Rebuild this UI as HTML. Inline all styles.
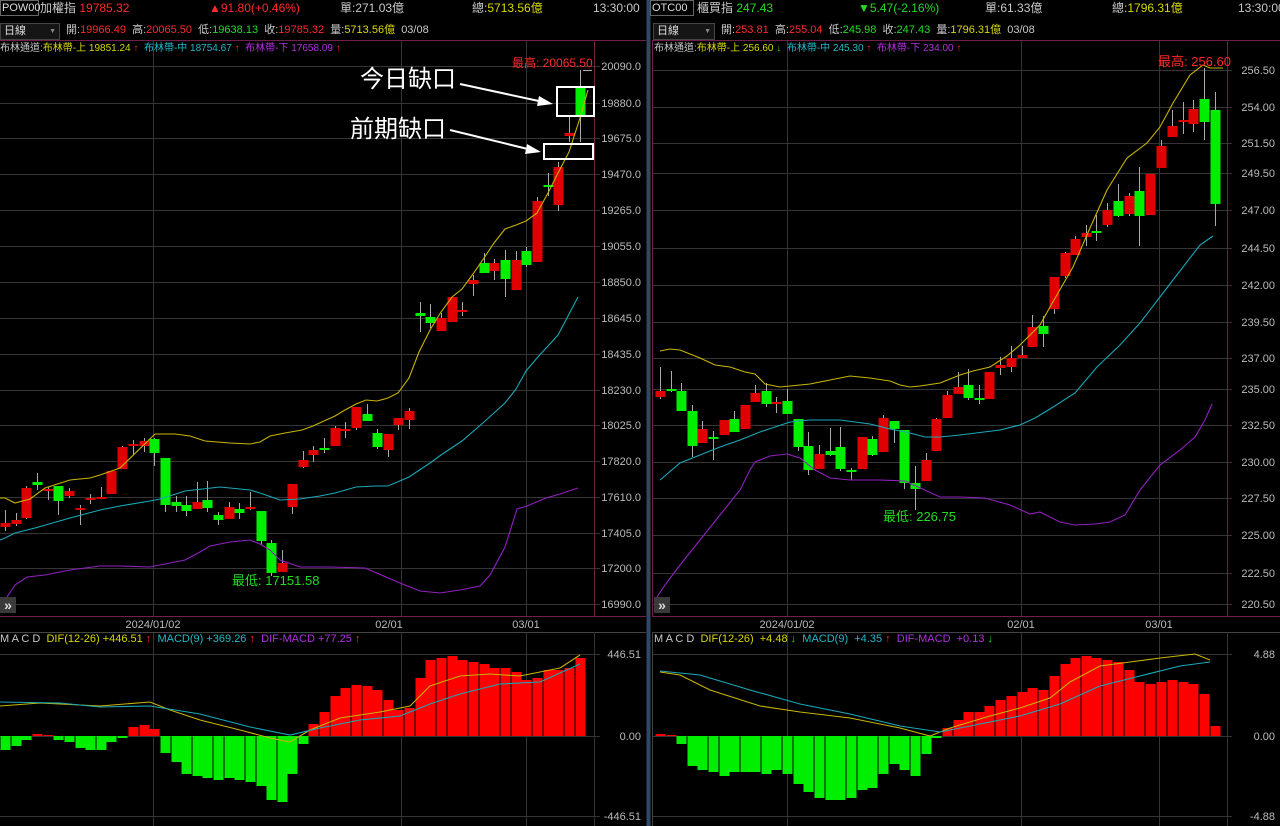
<!DOCTYPE html>
<html><head><meta charset="utf-8">
<style>
body{margin:0;background:#000;width:1280px;height:826px;overflow:hidden;font-family:"Liberation Sans","Noto Sans CJK TC",sans-serif;color:#c8c8c8}
.t{position:absolute;white-space:nowrap;font-size:12px;line-height:14px}
.r{color:#ff2a2a}.g{color:#22dd22}.y{color:#d8d800}.c{color:#22b8c8}.p{color:#b030e0}.w{color:#c8c8c8}
.box{position:absolute;border:1px solid #666;background:#000;font-size:11px;color:#ddd}
svg{position:absolute;left:0;top:0}
</style></head><body>
<svg id="s" width="1280" height="826" xmlns="http://www.w3.org/2000/svg" font-family="Liberation Sans, Noto Sans CJK TC, sans-serif"></svg>

<div class="box" style="left:0;top:0;width:36px;height:14px;line-height:14px;padding-left:1px">POW00</div>
<div class="t" style="left:40px;top:1px">加權指 <span class="r">19785.32</span></div>
<div class="t r" style="left:209px;top:1px">▲91.80(+0.46%)</div>
<div class="t" style="left:340px;top:1px">單:271.03億</div>
<div class="t" style="left:472px;top:1px">總:<span class="y">5713.56億</span></div>
<div class="t" style="left:593px;top:1px">13:30:00</div>
<div class="box" style="left:0;top:23px;width:55px;height:15px;line-height:15px;padding-left:3px;border-color:#444;background:#151515">日線<span style="float:right;font-size:7px;color:#888;margin-right:3px">▼</span></div>
<div class="t" style="left:66px;top:23px;font-size:11px">開:<span class="r">19966.49</span>&nbsp; 高:<span class="r">20065.50</span>&nbsp; 低:<span class="g">19638.13</span>&nbsp; 收:<span class="r">19785.32</span>&nbsp; 量:<span class="y">5713.56億</span>&nbsp; 03/08</div>
<div class="t" style="left:0;top:42px;font-size:10px">布林通道:<span class="y">布林帶-上 19851.24</span> <span class="r">↑</span>&nbsp; <span class="c">布林帶-中 18754.67</span> <span class="r">↑</span>&nbsp; <span class="p">布林帶-下 17658.09</span> <span class="r">↑</span></div>

<div class="box" style="left:650px;top:0;width:41px;height:14px;line-height:14px;padding-left:1px">OTC00</div>
<div class="t" style="left:697px;top:1px">櫃買指 <span class="g">247.43</span></div>
<div class="t g" style="left:858px;top:1px">▼5.47(-2.16%)</div>
<div class="t" style="left:985px;top:1px">單:61.33億</div>
<div class="t" style="left:1112px;top:1px">總:<span class="y">1796.31億</span></div>
<div class="t" style="left:1238px;top:1px">13:30:00</div>
<div class="box" style="left:653px;top:23px;width:57px;height:15px;line-height:15px;padding-left:3px;border-color:#444;background:#151515">日線<span style="float:right;font-size:7px;color:#888;margin-right:3px">▼</span></div>
<div class="t" style="left:721px;top:23px;font-size:11px">開:<span class="r">253.81</span>&nbsp; 高:<span class="r">255.04</span>&nbsp; 低:<span class="g">245.98</span>&nbsp; 收:<span class="g">247.43</span>&nbsp; 量:<span class="y">1796.31億</span>&nbsp; 03/08</div>
<div class="t" style="left:654px;top:42px;font-size:10px">布林通道:<span class="y">布林帶-上 256.60</span> <span class="g">↓</span>&nbsp; <span class="c">布林帶-中 245.30</span> <span class="r">↑</span>&nbsp; <span class="p">布林帶-下 234.00</span> <span class="r">↑</span></div>

<div class="t" style="left:0;top:632px;font-size:11px">M A C D&nbsp; <span class="y">DIF(12-26) +446.51</span> <span class="r">↑</span>&nbsp; <span class="c">MACD(9) +369.26</span> <span class="r">↑</span>&nbsp; <span class="p">DIF-MACD +77.25</span> <span class="r">↑</span></div>
<div class="t" style="left:654px;top:632px;font-size:11px">M A C D&nbsp; <span class="y">DIF(12-26)&nbsp; +4.48</span> <span class="g">↓</span>&nbsp; <span class="c">MACD(9)&nbsp; +4.35</span> <span class="r">↑</span>&nbsp; <span class="p">DIF-MACD&nbsp; +0.13</span> <span class="g">↓</span></div>

<div class="t r" style="left:512px;top:56px;font-size:12px">最高: 20065.50</div>
<div class="t g" style="left:232px;top:574px;font-size:13px">最低: 17151.58</div>
<div class="t r" style="left:1158px;top:55px;font-size:13px">最高: 256.60</div>
<div class="t g" style="left:883px;top:510px;font-size:13px">最低: 226.75</div>
<div class="t" style="left:360px;top:66px;font-size:24px;line-height:28px;color:#fff">今日缺口</div>
<div class="t" style="left:350px;top:116px;font-size:24px;line-height:28px;color:#fff">前期缺口</div>

<script>
var s=document.getElementById('s'),h='';
function L(x1,y1,x2,y2,c,w){h+='<line x1="'+x1+'" y1="'+y1+'" x2="'+x2+'" y2="'+y2+'" stroke="'+c+'" stroke-width="'+(w||1)+'"/>';}
function R(x,y,w,hh,c){h+='<rect x="'+x+'" y="'+y+'" width="'+w+'" height="'+hh+'" fill="'+c+'"/>';}
function P(pts,c){h+='<polyline fill="none" stroke="'+c+'" stroke-width="1.1" points="'+pts+'"/>';}
function T(x,y,t,c,a,fs){h+='<text x="'+x+'" y="'+y+'" fill="'+(c||'#bbbbbb')+'" font-size="'+(fs||11)+'" text-anchor="'+(a||'end')+'">'+t+'</text>';}
var G='#353535';
var ly=[66,103,138,174,210,246,282,318,354,390,425,461,497,533,568,604];
var ll=['20090.0','19880.0','19675.0','19470.0','19265.0','19055.0','18850.0','18645.0','18435.0','18230.0','18025.0','17820.0','17610.0','17405.0','17200.0','16990.0'];
ly.forEach(function(y,i){L(0,y+.5,600,y+.5,G);T(641,y+4,ll[i]);});
[153,401,526].forEach(function(x){L(x+.5,40,x+.5,616,G);L(x+.5,632,x+.5,826,G);});
var ry=[70,107,143,173,210,248,285,322,358,389,425,462,498,535,573,604];
var rl=['256.50','254.00','251.50','249.50','247.00','244.50','242.00','239.50','237.00','235.00','232.50','230.00','227.50','225.00','222.50','220.50'];
ry.forEach(function(y,i){L(652,y+.5,1232,y+.5,G);T(1275,y+4,rl[i]);});
[787,1021,1159].forEach(function(x){L(x+.5,40,x+.5,616,G);L(x+.5,632,x+.5,826,G);});
[654,736,816].forEach(function(y){L(0,y+.5,600,y+.5,G);L(652,y+.5,1232,y+.5,G);});
T(641,658,'446.51');T(641,740,'0.00');T(641,820,'-446.51');
T(1275,658,'4.88');T(1275,740,'0.00');T(1275,820,'-4.88');
T(153,628,'2024/01/02','#bbbbbb','middle');T(389,628,'02/01','#bbbbbb','middle');T(526,628,'03/01','#bbbbbb','middle');
T(787,628,'2024/01/02','#bbbbbb','middle');T(1021,628,'02/01','#bbbbbb','middle');T(1159,628,'03/01','#bbbbbb','middle');
L(0,40.5,646,40.5,'#70204a');L(594.5,40,594.5,616,'#70204a');L(0,616.5,646,616.5,'#70204a');
L(652.5,40,652.5,616,'#70204a');L(652,40.5,1280,40.5,'#70204a');L(1227.5,40,1227.5,616,'#70204a');L(652,616.5,1280,616.5,'#70204a');
L(0,632.5,646,632.5,'#444');L(652,632.5,1280,632.5,'#444');L(594.5,632,594.5,826,'#333');L(1227.5,632,1227.5,826,'#333');L(652.5,632,652.5,826,'#444');
R(646,0,1,826,'#223');R(647,0,3,826,'#2a4a6a');R(650,0,1,826,'#222');
function C(a){a.forEach(function(c){var col=c[5]?'#e00000':'#00ee00';L(c[0]+.5,c[3],c[0]+.5,c[4],'#aaa');var hh=Math.max(c[2]-c[1],2);R(c[0]-4.5,c[1],10,hh,col);});}
C([[5,523,527,510,531,1],[16,520,524,513,526,1],[26,488,518,486,519,1],[37,482,485,473,490,0],[48,489,491,487,500,1],[58,486,501,486,515,0],[69,491,496,488,498,1],[80,508,510,505,525,1],[90,498,500,494,504,1],[101,497,499,487,499,1],[111,471,494,471,494,1],[122,447,469,446,469,1],[133,444,446,440,455,1],[144,441,446,438,452,1],[154,439,453,438,466,0],[165,458,505,458,512,0],[176,502,506,496,512,0],[186,505,511,496,516,0],[197,502,509,482,509,1],[207,500,508,481,512,0],[218,515,520,512,525,0],[229,507,519,502,519,1],[239,509,513,503,519,0],[250,507,509,492,510,1],[261,511,541,511,545,0],[271,543,573,540,576,0],[282,563,572,550,572,1],[292,484,507,484,514,1],[303,460,467,451,468,1],[313,450,455,446,462,1],[324,448,450,438,453,0],[335,428,446,426,446,1],[345,429,431,422,438,1],[356,407,428,407,430,1],[367,414,421,404,421,0],[377,433,447,429,449,0],[388,434,450,434,457,1],[398,418,425,418,430,1],[409,411,420,408,429,1],[420,313,316,302,332,0],[430,317,323,304,328,0],[441,318,331,313,331,1],[452,297,322,297,322,1],[462,310,312,302,316,1],[473,280,284,275,296,1],[484,263,273,253,273,0],[494,263,271,259,280,1],[505,260,279,250,297,0],[516,260,290,251,290,1],[526,251,265,247,267,0],[537,201,262,197,262,1],[548,185,187,173,196,0],[558,167,205,162,211,1],[569,133,136,117,142,1],[580,88,117,70,142,0]]);
C([[660,391,397,367,399,1],[671,389,391,371,392,0],[681,391,411,383,411,0],[692,411,446,405,457,0],[702,429,443,421,443,1],[713,437,439,431,460,0],[724,420,435,420,435,1],[734,419,432,411,432,0],[745,405,429,405,429,1],[755,393,402,385,402,1],[766,391,404,383,407,0],[776,402,404,397,413,1],[787,401,414,389,414,0],[798,419,447,419,451,0],[808,446,470,432,475,0],[819,454,469,445,469,1],[830,451,455,428,456,0],[840,447,469,427,471,0],[851,470,472,468,480,0],[862,437,469,437,469,1],[872,439,455,436,456,0],[883,418,452,415,452,1],[894,421,429,421,443,0],[904,430,483,430,489,0],[915,483,489,466,510,0],[926,460,481,453,481,1],[936,419,451,418,451,1],[947,395,418,391,418,1],[958,387,394,372,394,1],[968,385,398,369,400,0],[979,398,400,385,404,0],[989,372,399,372,399,1],[1000,365,368,357,375,1],[1011,358,367,346,372,1],[1022,355,358,346,358,1],[1032,327,347,315,347,1],[1043,326,334,316,347,0],[1054,277,309,277,314,1],[1065,253,276,252,278,1],[1075,239,255,236,255,1],[1086,233,237,225,246,1],[1096,231,233,215,241,0],[1107,210,225,203,227,1],[1118,201,216,184,217,0],[1129,196,214,193,216,1],[1139,191,216,167,246,0],[1150,174,215,174,215,1],[1161,146,168,140,168,1],[1172,126,137,110,137,1],[1183,120,122,102,134,1],[1193,109,124,100,132,1],[1204,99,122,68,140,0],[1215,110,204,92,226,0]]);
P('0,498 5,498 15,503 30,499 45,488 70,480 90,478 100,475 120,468 155,434 175,434 190,436 205,441 230,443 250,444 260,442 270,436 285,433 302,430 313,426 324,421 335,416 345,410 356,404 366,400 377,401 388,398 398,393 409,378 419,352 430,330 441,312 452,297 462,289 473,274 484,258 494,243 505,229 516,225 526,221 537,213 548,193 558,173 569,152 580,118 588,90','#c8b400');
L(583,70.5,592,70.5,'#aaa');
P('0,540 5,538 15,533 35,528 70,518 100,510 120,506 150,501 160,499 185,491 220,487 250,490 260,493 280,500 300,499 320,496 335,493 356,487 375,486 388,486 409,477 430,463 441,455 462,441 484,422 505,403 516,389 526,371 537,358 558,335 578,297','#1aa8b8');
P('0,606 5,600 15,585 27,577 45,575 70,570 100,566 120,566 150,567 185,560 200,552 210,546 230,542 250,540 260,544 270,550 280,560 300,567 330,567 365,568 400,583 420,591 440,593 460,590 480,586 490,575 505,547 517,509 527,506 546,498 560,494 578,488','#9020c0');
P('660,351 670,349 680,350 700,358 715,365 730,367 745,372 755,374 765,384 780,387 800,385 810,384 830,380 850,376 870,378 890,381 900,385 910,387 920,386 940,383 960,375 973,371 990,367 1007,356 1020,345 1040,325 1050,307 1073,267 1090,228 1107,190 1127,158 1147,143 1160,127 1173,103 1190,75 1203,65 1210,68 1223,68','#c8b400');
P('660,480 680,463 700,455 720,447 740,440 760,432 775,427 790,422 810,420 840,420 870,424 890,429 910,433 925,437 940,437 960,435 1000,430 1020,425 1035,418 1050,409 1075,393 1097,367 1120,345 1140,323 1173,280 1200,245 1213,236','#1aa8b8');
P('655,600 665,585 680,565 700,540 720,515 740,490 750,470 755,462 770,456 787,454 800,458 815,470 830,478 850,480 880,480 905,481 940,497 960,497 985,498 1010,505 1030,514 1040,512 1060,522 1075,525 1095,524 1110,522 1125,515 1140,490 1160,465 1180,450 1195,437 1205,420 1212,404','#9020c0');
h+='<rect x="557" y="87" width="37" height="29" fill="none" stroke="#fff" stroke-width="2"/>';
h+='<rect x="544" y="144" width="49" height="15" fill="none" stroke="#fff" stroke-width="2"/>';
L(460,84,548,103,'#fff',2);h+='<polygon points="553,104 539,96 537,106" fill="#fff"/>';
L(450,130,536,151,'#fff',2);h+='<polygon points="541,152 527,144 525,154" fill="#fff"/>';
[[0,597],[654,597]].forEach(function(b){R(b[0],b[1],16,16,'#3a3a3a');h+='<text x="'+(b[0]+8)+'" y="'+(b[1]+13)+'" fill="#ddd" font-size="14" font-weight="bold" text-anchor="middle">»</text>';});
function B(a){a.forEach(function(v){var y=v[1]>0?736-v[1]:736;R(v[0]-4.5,y,10,Math.abs(v[1])||1,v[1]>0?'#ff0000':'#00ee00');});}
B([[5,-14],[16,-10],[26,-4],[37,2],[48,1],[58,-4],[69,-6],[80,-12],[90,-14],[101,-14],[111,-6],[122,-2],[133,9],[144,11],[154,7],[165,-17],[176,-26],[186,-38],[197,-40],[207,-42],[218,-44],[229,-42],[239,-44],[250,-46],[261,-50],[271,-64],[282,-66],[292,-38],[303,-8],[313,12],[324,24],[335,40],[345,48],[356,51],[367,50],[377,46],[388,36],[398,26],[409,28],[420,58],[430,76],[441,78],[452,80],[462,76],[473,74],[484,72],[494,68],[505,68],[516,64],[526,56],[537,58],[548,66],[558,66],[569,68],[580,78]]);
B([[660,2],[671,1],[681,-8],[692,-30],[702,-34],[713,-36],[724,-40],[734,-36],[745,-36],[755,-36],[766,-38],[776,-34],[787,-38],[798,-48],[808,-56],[819,-62],[830,-64],[840,-64],[851,-62],[862,-54],[872,-52],[883,-38],[894,-28],[904,-34],[915,-40],[926,-18],[936,-2],[947,8],[958,16],[968,24],[979,24],[989,30],[1000,36],[1011,40],[1022,44],[1032,48],[1043,46],[1054,60],[1065,72],[1075,78],[1086,80],[1096,78],[1107,76],[1118,74],[1129,66],[1139,54],[1150,52],[1161,54],[1172,56],[1183,54],[1193,52],[1204,42],[1215,10]]);
P('0,706 40,703 100,706 150,702 170,710 200,720 240,730 270,738 290,742 310,730 340,718 380,712 410,706 430,686 460,676 490,674 520,676 540,672 560,668 580,655','#c8b400');
P('0,702 60,703 100,707 150,706 200,714 250,727 290,735 320,728 360,720 400,716 430,704 460,694 500,684 540,682 580,664','#1aa8b8');
P('660,672 680,675 710,690 760,706 800,712 850,718 900,728 930,736 950,728 990,716 1020,708 1050,698 1070,682 1100,666 1130,662 1160,658 1195,654 1210,660','#c8b400');
P('660,671 700,675 750,690 800,704 850,714 900,726 940,732 980,724 1020,716 1060,704 1100,686 1140,676 1180,666 1210,662','#1aa8b8');
s.innerHTML=h;
</script>
</body></html>
